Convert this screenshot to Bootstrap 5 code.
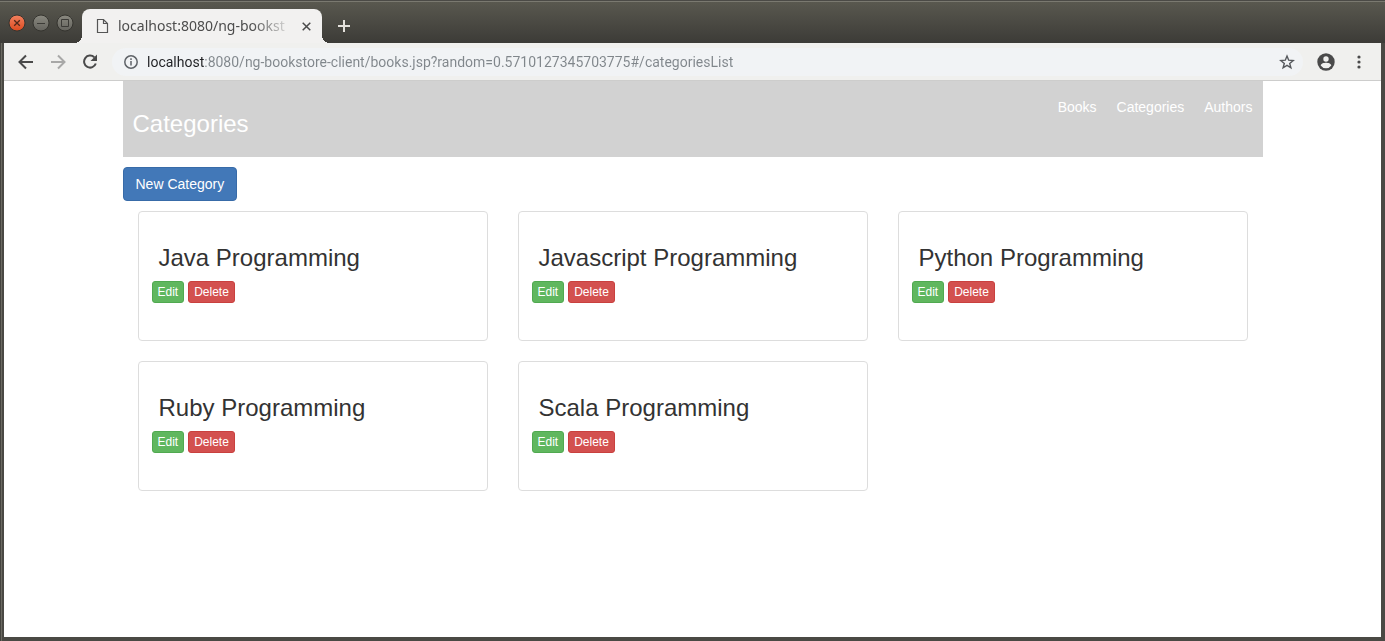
<!DOCTYPE html>
<html lang="en">
<head>
<meta charset="utf-8">
<meta name="viewport" content="width=device-width, initial-scale=1">
<title>Categories</title>
<link href="https://cdn.jsdelivr.net/npm/bootstrap@5.3.0/dist/css/bootstrap.min.css" rel="stylesheet">
<style>
  body { font-family: "Liberation Sans", Arial, sans-serif; font-size: 14px; line-height: 20px; color: #333; background: #3c3b37; }
  button svg, .tab svg, .omnibox svg { display: block; }
  .window { padding: 0 4px 4px; background: #4a4944; box-shadow: inset 1px 0 #45443f, inset 2px 0 #6b6a62; }
  .titlebar { height: 43px; margin: 0 -4px; padding: 9px 8px 0; background: linear-gradient(#4b4a46 0, #4b4a46 1px, #7a7970 1px, #7a7970 2px, #59584f 2px, #3c3b37 100%); }
  .controls { gap: 6px; padding-top: 5px; margin-right: 8px; }
  .chrome-btn { padding: 0; border: 0; background: none; color: #4a4a4a; }
  .tab { position: relative; width: 240px; height: 34px; padding: 0 11px 0 14px; background: #f2f1f0; border-radius: 8px 8px 0 0; font-family: "Noto Sans", sans-serif; color: #4c4c4c; }
  .tab::before, .tab::after { content: ""; position: absolute; bottom: 0; width: 8px; height: 8px; }
  .tab::before { right: 100%; background: radial-gradient(circle at 0 0, transparent 8px, #f2f1f0 8px); }
  .tab::after { left: 100%; background: radial-gradient(circle at 100% 0, transparent 8px, #f2f1f0 8px); }
  .tab-label { margin: 0 auto 0 9px; white-space: nowrap; font-size: 14px; -webkit-mask-image: linear-gradient(90deg, #000 80%, transparent 105%); mask-image: linear-gradient(90deg, #000 80%, transparent 105%); }
  .toolbar { height: 38px; padding: 0 14px 0 13px; background: #f0f0ee; border-bottom: 1px solid #cdcdcc; }
  .omnibox { height: 28px; padding: 0 8px 0 12px; margin: 0 14px 0 13px; border-radius: 14px; background: #f1f3f5; }
  .address { min-width: 0; height: 24px; margin-left: 9px; padding: 0; border: 0; outline: 0; font-family: Roboto, sans-serif; font-size: 14px; color: #80868b; background: linear-gradient(90deg, #202124 58px, #80868b 58px); -webkit-background-clip: text; background-clip: text; -webkit-text-fill-color: transparent; }
  .page { min-height: calc(100vh - 85px); background: #fff; }
  .banner { height: 76px; padding: 10px; background: #d2d2d2; color: #fff; }
  .banner h1 { margin: 20px 0 0; }
  .banner h1, .tile h2 { font-size: 24px; line-height: 26px; font-weight: 400; }
  .banner nav { gap: 20px; padding-top: 6px; }
  .btn { --bs-btn-font-size: 14px; --bs-btn-line-height: 20px; --bs-btn-border-radius: 4px; --bs-btn-color: #fff; }
  .btn-new { --bs-btn-bg: #4278b8; --bs-btn-border-color: #386ba8; margin: 10px 0; }
  .btn-xs { --bs-btn-padding-x: 5px; --bs-btn-padding-y: 1px; --bs-btn-font-size: 12px; --bs-btn-line-height: 18px; --bs-btn-border-radius: 3px; }
  .btn-edit { --bs-btn-bg: #60b75f; --bs-btn-border-color: #50a950; }
  .btn-delete { --bs-btn-bg: #d3504f; --bs-btn-border-color: #c9403e; }
  .tiles { --bs-gutter-x: 30px; --bs-gutter-y: 0; }
  .tile { min-height: 130px; margin-bottom: 20px; padding: 33px 13px 20px; border: 1px solid #ddd; border-radius: 4px; }
  .tile h2 { margin: 0 0 10px; padding-left: 7px; }
</style>
</head>
<body>
<div class="window">
  <div class="titlebar d-flex">
    <div class="controls d-flex">
      <button class="chrome-btn d-flex" aria-label="Close window"><svg width="18" height="18" viewBox="0 0 18 18"><defs><linearGradient id="o" x2="0" y2="1"><stop stop-color="#f28260"/><stop offset="1" stop-color="#dc4a1e"/></linearGradient><linearGradient id="g" x2="0" y2="1"><stop stop-color="#8a8980"/><stop offset="1" stop-color="#64635d"/></linearGradient></defs><circle cx="9" cy="9" r="8" fill="url(#o)" stroke="#35342f"/><path d="M6.200 6.200l5.600 5.600m0-5.600l-5.600 5.600" stroke="#51281a" stroke-width="1.300"/></svg></button>
      <button class="chrome-btn d-flex" aria-label="Minimize"><svg width="18" height="18" viewBox="0 0 18 18"><circle cx="9" cy="9" r="8" fill="url(#g)" stroke="#35342f"/><path d="M5 9.500h8" stroke="#3c3b37"/></svg></button>
      <button class="chrome-btn d-flex" aria-label="Maximize"><svg width="18" height="18" viewBox="0 0 18 18"><circle cx="9" cy="9" r="8" fill="url(#g)" stroke="#35342f"/><path d="M5.500 5.500h7v7h-7z" fill="none" stroke="#3c3b37"/></svg></button>
    </div>
    <div class="tab d-flex align-items-center">
      <svg width="13" height="16" viewBox="0 0 13 16" fill="none" stroke="#555" stroke-width="1.200"><path d="M1.500 1.500h6l4 4v9h-10zM7.500 1.500v4h4"/></svg>
      <span class="tab-label">localhost:8080/ng-bookst</span>
      <button class="chrome-btn" aria-label="Close tab"><svg width="9" height="9" viewBox="0 0 9 9" stroke="currentColor" stroke-width="1.500"><path d="M.7.7l7.600 7.600M8.300.7L.7 8.300"/></svg></button>
    </div>
    <button class="chrome-btn ms-3" aria-label="New tab"><svg width="12" height="12" viewBox="0 0 12 12" stroke="#e4e1dc" stroke-width="2"><path d="M6 0v12M0 6h12"/></svg></button>
  </div>
  <div class="toolbar d-flex align-items-center">
    <button class="chrome-btn" aria-label="Back"><svg width="18" height="18" viewBox="0 0 18 18" fill="none" stroke="#4a4a4a" stroke-width="2"><path d="M16 9H3M9 2.500L2.500 9L9 15.500"/></svg></button>
    <button class="chrome-btn ms-3" aria-label="Forward"><svg width="16" height="18" viewBox="0 0 16 18" fill="none" stroke="#a8a8a7" stroke-width="2"><path d="M0 9h13M7 2.500L13.500 9L7 15.500"/></svg></button>
    <button class="chrome-btn ms-3" aria-label="Reload"><svg width="16" height="18" viewBox="0 0 16 18" fill="none"><path d="M11.300 4.300A6 6 0 1 0 12.800 10.500" stroke="#4a4a4a" stroke-width="2"/><path d="M14 1.500v6.500H7.500z" fill="#4a4a4a"/></svg></button>
    <div class="omnibox flex-grow-1 d-flex align-items-center">
      <svg width="14" height="14" viewBox="0 0 14 14" fill="none" stroke="#5f6368" stroke-width="1.500"><circle cx="7" cy="7" r="6.200"/><path d="M7 6v4.500M7 3.300v1.600"/></svg>
      <input class="address flex-grow-1" type="text" aria-label="Address" value="localhost:8080/ng-bookstore-client/books.jsp?random=0.5710127345703775#/categoriesList">
      <button class="chrome-btn" aria-label="Bookmark"><svg width="16" height="16" viewBox="0 0 16 16" fill="none" stroke="#55585c" stroke-width="1.400"><path d="M8 2l1.700 4.200 4.500.3-3.500 2.900 1.200 4.400L8 11.400l-3.900 2.400 1.200-4.400-3.500-2.900 4.500-.3z"/></svg></button>
    </div>
    <button class="chrome-btn" aria-label="Profile"><svg width="18" height="18" viewBox="0 0 18 18"><circle cx="9" cy="9" r="8.700" fill="#4a4a4a"/><circle cx="9" cy="6" r="2.700" fill="#f0f0ee"/><path d="M3.700 12.500C4 10.500 7 9.800 9 9.800s5 .7 5.300 2.700A6.400 6.400 0 0 1 9 15.300a6.400 6.400 0 0 1-5.300-2.800z" fill="#f0f0ee"/></svg></button>
    <button class="chrome-btn ms-3" aria-label="Menu"><svg width="16" height="16" viewBox="0 0 16 16" fill="#4a4a4a"><circle cx="8" cy="3" r="1.600"/><circle cx="8" cy="8" r="1.600"/><circle cx="8" cy="13" r="1.600"/></svg></button>
  </div>
  <div class="page">
    <div class="container px-0">
      <header class="banner d-flex justify-content-between align-items-start">
        <h1>Categories</h1>
        <nav class="d-flex">
          <a class="text-white text-decoration-none" href="#books">Books</a>
          <a class="text-white text-decoration-none" href="#categories">Categories</a>
          <a class="text-white text-decoration-none" href="#authors">Authors</a>
        </nav>
      </header>
      <button class="btn btn-new">New Category</button>
      <main class="row tiles mx-0">
        <div class="col-sm-6 col-md-4"><section class="tile"><h2>Java Programming</h2><div class="d-flex gap-1"><button class="btn btn-xs btn-edit">Edit</button><button class="btn btn-xs btn-delete">Delete</button></div></section></div>
        <div class="col-sm-6 col-md-4"><section class="tile"><h2>Javascript Programming</h2><div class="d-flex gap-1"><button class="btn btn-xs btn-edit">Edit</button><button class="btn btn-xs btn-delete">Delete</button></div></section></div>
        <div class="col-sm-6 col-md-4"><section class="tile"><h2>Python Programming</h2><div class="d-flex gap-1"><button class="btn btn-xs btn-edit">Edit</button><button class="btn btn-xs btn-delete">Delete</button></div></section></div>
        <div class="col-sm-6 col-md-4"><section class="tile"><h2>Ruby Programming</h2><div class="d-flex gap-1"><button class="btn btn-xs btn-edit">Edit</button><button class="btn btn-xs btn-delete">Delete</button></div></section></div>
        <div class="col-sm-6 col-md-4"><section class="tile"><h2>Scala Programming</h2><div class="d-flex gap-1"><button class="btn btn-xs btn-edit">Edit</button><button class="btn btn-xs btn-delete">Delete</button></div></section></div>
      </main>
    </div>
  </div>
</div>
<script src="https://cdn.jsdelivr.net/npm/bootstrap@5.3.0/dist/js/bootstrap.bundle.min.js"></script>
</body>
</html>
